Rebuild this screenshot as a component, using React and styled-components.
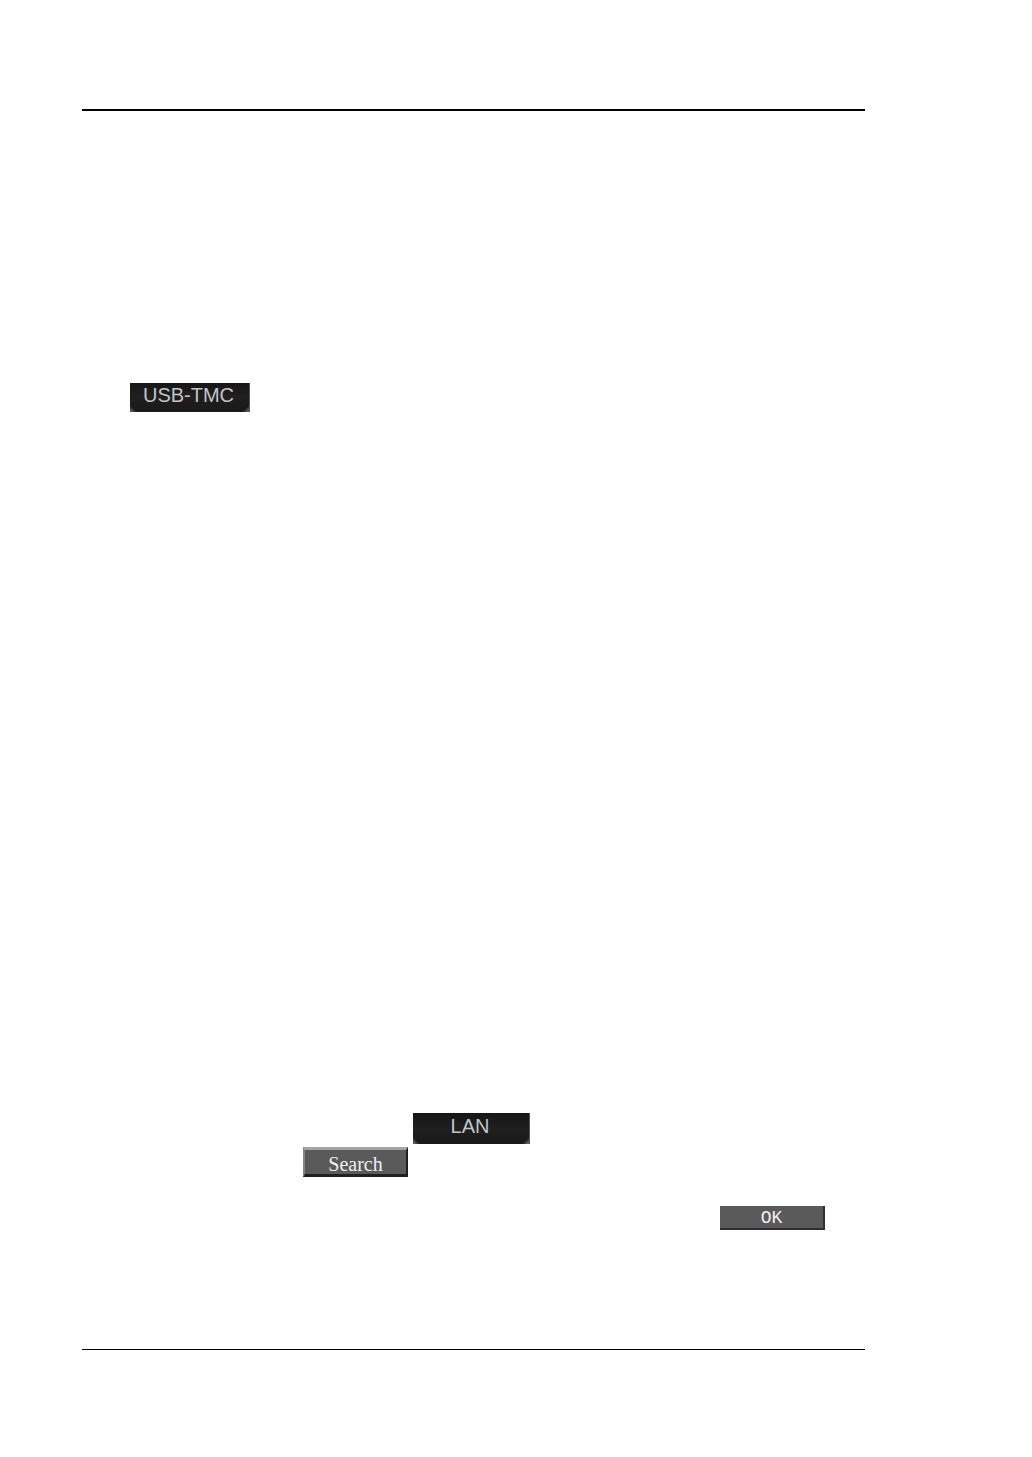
import styled, { createGlobalStyle } from 'styled-components'


const GlobalStyle = createGlobalStyle`
	* {
		box-sizing: border-box;
	}

	body {
		background-color: #fff;
		margin: 0;
	}
`

const Page = styled.div`
	display: flex;
	flex-direction: column;
	min-height: 100vh;
	padding: 109px 167px 107px 82px;
	width: 100%;
`

const Rule = styled.hr`
	background-color: #000;
	border: 0;
	flex: 0 0 auto;
	height: ${({ $thickness }) => $thickness}px;
	margin: 0;
	width: 100%;
`

const Content = styled.main`
	display: flex;
	flex: 1 1 auto;
	flex-direction: column;
	padding: 272px 40px 119px 48px;
`

const UsbSection = styled.section`
	display: flex;
	padding-bottom: 701px;
`

const LanSection = styled.section`
	display: flex;
	flex-direction: column;
`

const Row = styled.div`
	display: flex;
	justify-content: ${({ $align }) => $align || 'flex-start'};
	padding-left: ${({ $indent }) => $indent || 0}px;
	padding-bottom: ${({ $gap }) => $gap || 0}px;
`

const TabButton = styled.button`
	background:
		linear-gradient(45deg, #585858 2px, transparent 5px),
		linear-gradient(315deg, #585858 2px, transparent 5px),
		linear-gradient(#161616, #1f1f1f 50%, #191919);
	border: 0;
	border-right: 1px solid #555;
	color: #c4c4c4;
	font-family: 'Liberation Sans', Arial, sans-serif;
	font-size: 20px;
	height: ${({ $height }) => $height}px;
	line-height: 24px;
	padding: 0 2px 5px 0;
	width: ${({ $width }) => $width}px;
`

const PanelButton = styled.button`
	background-color: #5a5a5a;
	border: 0 solid;
	border-color: #a4a4a4 #303030 #303030 #858585;
	border-width: 0 2px 2px 0;
	color: #f0f0f0;
	font-family: 'Liberation Mono', 'Courier New', monospace;
	font-size: 18px;
	height: 24px;
	line-height: 20px;
	padding: 2px 0 0;
	width: 105px;
`

const RaisedButton = styled(PanelButton)`
	border-color: #a4a4a4 #202020 #202020 #858585;
	border-width: 3px 2px 3px 2px;
	font-family: 'Liberation Serif', 'Times New Roman', serif;
	font-size: 20px;
	height: 30px;
	padding: 4px 0 0;
`

const App = () => {
  return (
    <>
			<GlobalStyle />
			<Page>
				<Rule $thickness={ 2 } />
				<Content>
					<UsbSection>
						<TabButton type="button" $width={ 120 } $height={ 29 }>USB-TMC</TabButton>
					</UsbSection>
					<LanSection>
						<Row $indent={ 283 } $gap={ 3 }>
							<TabButton type="button" $width={ 117 } $height={ 31 }>LAN</TabButton>
						</Row>
						<Row $indent={ 173 } $gap={ 29 }>
							<RaisedButton type="button">Search</RaisedButton>
						</Row>
						<Row $align="flex-end">
							<PanelButton type="button">OK</PanelButton>
						</Row>
					</LanSection>
				</Content>
				<Rule $thickness={ 1 } />
			</Page>
    </>
  );
}

export default App;
